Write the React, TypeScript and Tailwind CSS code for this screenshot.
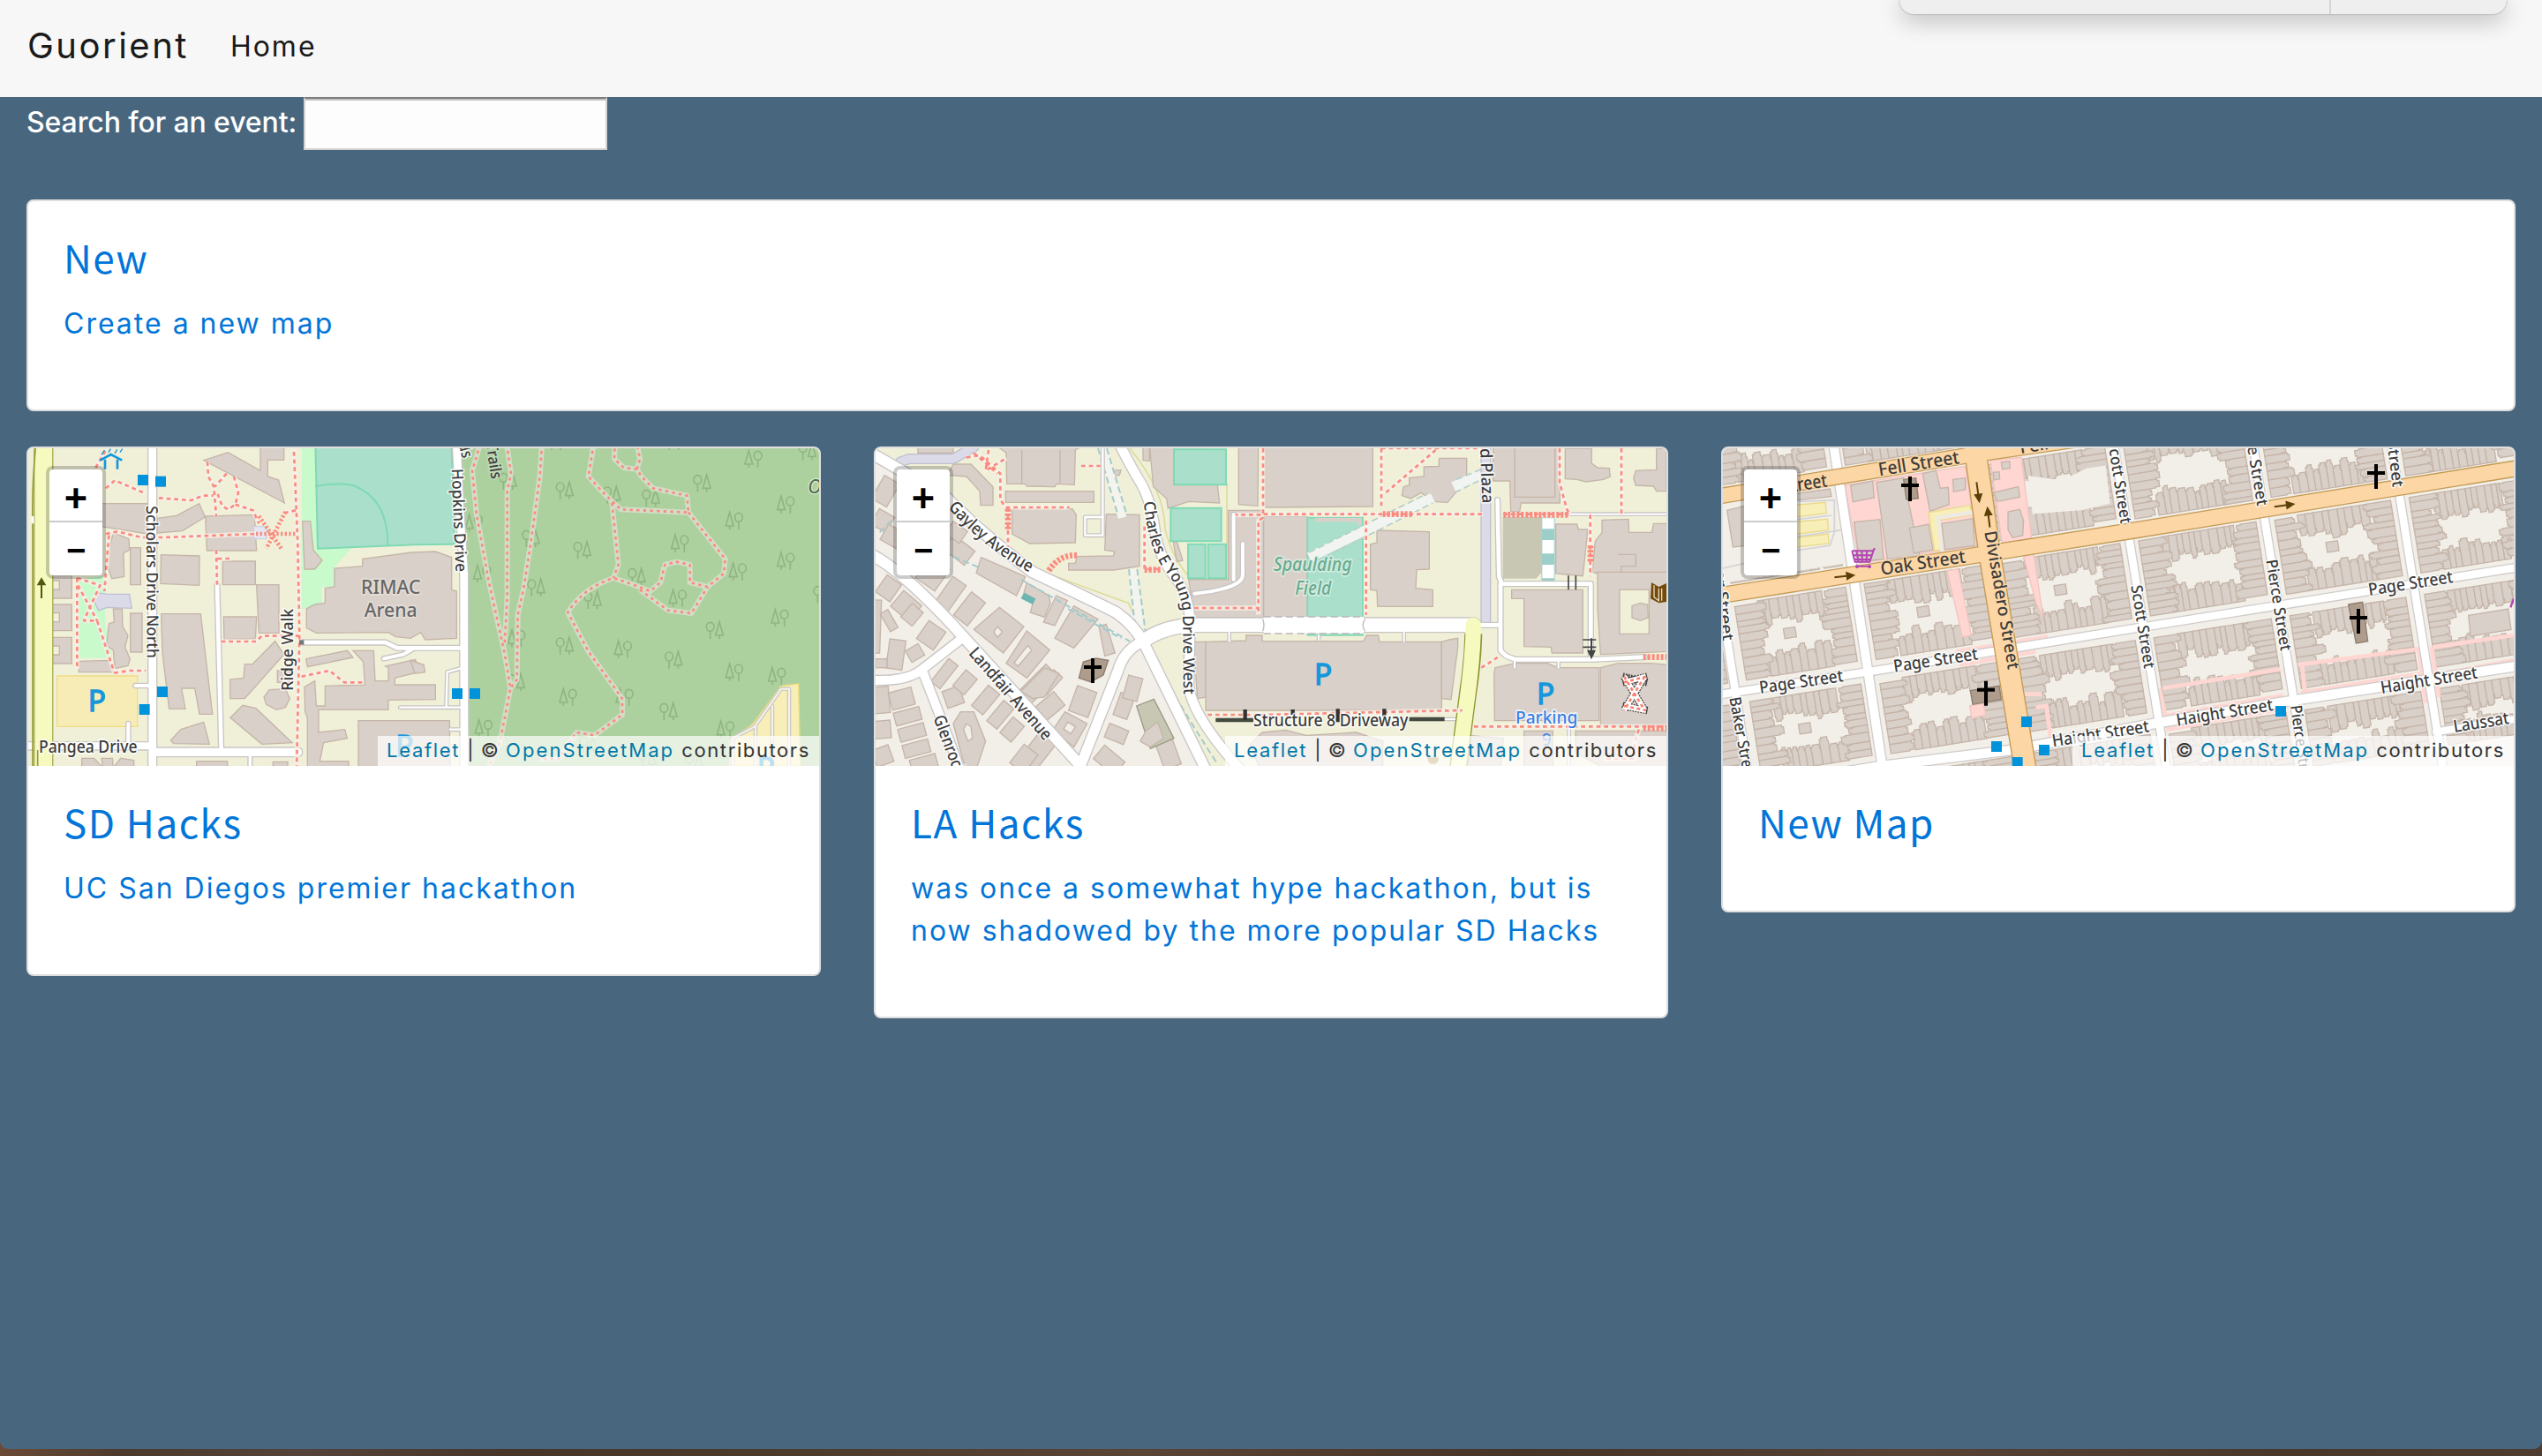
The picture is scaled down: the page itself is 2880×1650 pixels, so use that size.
import React from "react";

type P = [number, number];
const BLD = "#d9d0c9";
const BLD_EDGE = "#c5b5a9";

/** Filled outline built from a point list. */
function B({ d, f = BLD, s = BLD_EDGE, w = 4 }: { d: string; f?: string; s?: string; w?: number }) {
  return <polygon points={d} fill={f} stroke={s} strokeWidth={w} />;
}

/** Rectangle turned around its centre. */
function R({ v, f = BLD, s = BLD_EDGE }: { v: [number, number, number, number, number]; f?: string; s?: string }) {
  const [cx, cy, w, h, a] = v;
  return (
    <rect x={cx - w / 2} y={cy - h / 2} width={w} height={h} fill={f} stroke={s} strokeWidth={4} transform={`rotate(${a} ${cx} ${cy})`} />
  );
}

/** Streets: all casings first and then all fills, so that junctions join. */
function Roads({ list, c = "#c9c5c4", f = "#fff" }: { list: [string, number][]; c?: string; f?: string }) {
  return (
    <g fill="none" strokeLinejoin="round" strokeLinecap="round">
      {list.map(([d, w], i) => <path key={"c" + i} d={d} stroke={c} strokeWidth={w + 8} />)}
      {list.map(([d, w], i) => <path key={"f" + i} d={d} stroke={f} strokeWidth={w} />)}
    </g>
  );
}

function Paths({ list, halo = "#f8f0e8", o = 0.8, dash = "14 12", w = 16 }: { list: string[]; halo?: string; o?: number; dash?: string; w?: number }) {
  return (
    <g fill="none" strokeLinejoin="round">
      {list.map((d, i) => <path key={"h" + i} d={d} stroke={halo} strokeOpacity={o} strokeWidth={w} />)}
      {list.map((d, i) => <path key={"p" + i} d={d} stroke="#fa8b7f" strokeWidth={8} strokeDasharray={dash} />)}
    </g>
  );
}

/** Text set along the line from (x1,y1) to (x2,y2). */
function L({ v, t, fs = 58, c = "#3c3c3c", halo = "#fff", it = false }: { v: [number, number, number, number]; t: string; fs?: number; c?: string; halo?: string; it?: boolean }) {
  const [x1, y1, x2, y2] = v;
  const a = (Math.atan2(y2 - y1, x2 - x1) * 180) / Math.PI;
  return (
    <text x={x1} y={y1} transform={`rotate(${a} ${x1} ${y1})`} textLength={Math.hypot(x2 - x1, y2 - y1)} lengthAdjust="spacingAndGlyphs" fontSize={fs} fontWeight={500} fill={c} stroke={halo} strokeOpacity={0.75} strokeWidth={10} strokeLinejoin="round" paintOrder="stroke" fontStyle={it ? "italic" : "normal"}>
      {t}
    </text>
  );
}

function Curve({ id, d, t, len, fs = 58 }: { id: string; d: string; t: string; len: number; fs?: number }) {
  return (
    <>
      <path id={id} d={d} fill="none" />
      <text fontSize={fs} fontWeight={500} fill="#3c3c3c" stroke="#fff" strokeOpacity={0.75} strokeWidth={10} paintOrder="stroke">
        <textPath href={"#" + id} textLength={len} lengthAdjust="spacingAndGlyphs">{t}</textPath>
      </text>
    </>
  );
}

function Stops({ at }: { at: P[] }) {
  return <g fill="#0092da">{at.map(([x, y], i) => <rect key={i} x={x - 18} y={y - 18} width={36} height={36} />)}</g>;
}

function Parking({ x, y, o = 1 }: { x: number; y: number; o?: number }) {
  return <text x={x} y={y} fontSize={100} fill="#1597dc" stroke="#1597dc" strokeWidth={4} fillOpacity={o} strokeOpacity={o}>P</text>;
}

function Cross({ x, y }: { x: number; y: number }) {
  return <path d={`M${x} ${y - 42}V${y + 42}M${x - 30} ${y - 12}H${x + 30}`} stroke="#000" strokeWidth={12} />;
}

function Arrow({ v, c = "#5a4008" }: { v: [number, number, number]; c?: string }) {
  const [x, y, a] = v;
  return <path transform={`translate(${x} ${y}) rotate(${a})`} d="M-35 -3H5V-15L37 0L5 15V3H-35Z" fill={c} />;
}

function Trees({ pines, rounds }: { pines: P[]; rounds: P[] }) {
  const pine = "M0 -28L-13 18H13ZM0 18V30";
  const round = "M0 -26A13 15 0 1 0 0 4A13 15 0 1 0 0 -26M0 4V30";
  return (
    <g fill="none" stroke="#8fb583" strokeWidth={5}>
      {pines.map(([x, y], i) => (
        <g key={"a" + i}><path d={pine} transform={`translate(${x - 15} ${y})`} /><path d={round} transform={`translate(${x + 16} ${y})`} /></g>
      ))}
      {rounds.map(([x, y], i) => (
        <g key={"b" + i}><path d={round} transform={`translate(${x - 16} ${y})`} /><path d={pine} transform={`translate(${x + 15} ${y})`} /></g>
      ))}
    </g>
  );
}

function MapCanvas({ box, bg, children }: { box: string; bg: string; children: React.ReactNode }) {
  return (
    <svg viewBox={box} className="block h-full w-full rounded-t-[6px] font-['Noto_Sans',sans-serif]" style={{ background: bg }}>
      {children}
    </svg>
  );
}

const forestPines: P[] = [[2560, 90], [2670, 245], [2495, 300], [2310, 377], [2670, 437], [2507, 473], [2303, 563], [1638, 480], [1610, 308], [2650, 630], [2117, 737], [2495, 815], [2640, 828], [1755, 700], [1930, 900], [2122, 900], [1643, 1005], [2465, 1010], [1890, 30], [2290, 30]];
const forestRounds: P[] = [[2387, 172], [1920, 197], [2080, 212], [2213, 222], [1805, 360], [1980, 400], [2165, 490], [1823, 527], [2015, 570], [1727, 165], [2430, 672], [1920, 725], [2290, 773], [1755, 850], [2273, 948], [2795, 550], [2000, 1060], [2745, 64], [2200, 1110], [2360, 1120]];

function SanDiegoMap() {
  return (
    <MapCanvas box="96 54 2688 1080" bg="#f0f0d8">
      <B d="1565,40 2800,40 2800,1150 1593,1150 1590,500" f="#add19e" s="#add19e" />
      <Trees pines={forestPines} rounds={forestRounds} />
      <B d="1028,40 1072,40 1078,396 1190,396 1137,455 1137,520 1092,525 1092,585 1026,600" f="#c8facc" s="#c8facc" />
      <B d="1072,40 1535,40 1545,380 1410,382 1080,395" f="#aae0cb" s="#7fd9b4" w={6} />
      <path d="M1072 183Q1150 170 1200 180Q1320 225 1318 385" fill="none" stroke="#7fd9b4" strokeWidth={6} />
      <B d="262,500 355,490 355,650 380,765 268,765" f="#c8facc" s="#c8facc" />
      <B d="2480,1050 2560,990 2655,862 2714,855 2720,1134 2480,1134" f="#f7efb7" s="#eede7c" />
      <B d="194,828 467,828 467,1000 194,1000" f="#f7ecb5" s="#f0dc84" />
      {/* college buildings */}
      <B d="693,95 775,68 885,130 885,40 965,40 965,94 910,94 910,150 947,162 967,240" />
      <B d="345,242 500,242 500,345 345,320" />
      <B d="535,292 600,283 677,242 697,288 620,335 535,342" />
      <B d="698,285 865,280 872,402 703,402" />
      <B d="385,340 438,362 440,400 420,410 422,490 380,497 360,440" />
      <B d="443,392 478,392 478,518 443,518" />
      <B d="547,416 678,420 677,520 546,514" />
      <B d="757,438 868,438 868,518 757,518" />
      <B d="872,518 948,518 948,682 880,682" />
      <B d="760,627 872,627 868,702 762,704" />
      <B d="548,617 682,617 722,958 678,958 662,870 617,870 630,940 575,940 552,750" />
      <B d="443,615 483,615 483,747 443,747" />
      <B d="385,600 415,600 417,660 435,690 425,730 442,770 435,793 390,803 385,740 362,725 370,650 388,645" />
      <B d="268,778 370,775 385,815 268,815" />
      {[[210, 520], [210, 630], [210, 742]].map(([x, y]) => (
        <g key={y}><B d={`${x - 40},${y - 45} ${x + 34},${y - 45} ${x + 34},${y + 44} ${x - 40},${y + 44}`} /><B d={`${x - 38},${y - 16} ${x - 8},${y - 16} ${x - 8},${y + 14} ${x - 38},${y + 14}`} f="#f0f0d8" /></g>
      ))}
      <B d="935,710 965,755 832,905 782,905 782,840 828,835 832,788 858,788" />
      <B d="943,810 985,810 985,850 943,850" />
      <B d="915,875 970,872 985,905 970,935 940,943 905,925 897,900" />
      <B d="783,970 825,928 870,938 993,1055 890,1060" />
      <B d="580,1047 615,1010 692,985 712,1060 590,1058" />
      <B d="278,1108 320,1108 350,1140 345,1108 382,1108 385,1140 410,1108 455,1115 455,1150 278,1150" />
      <B d="668,1118 773,1118 773,1150 668,1150" />
      <B d="928,1120 978,1120 978,1150 928,1150" />
      <B d="1028,302 1055,302 1065,400 1095,435 1070,465 1035,465" />
      <B d="1232,430 1400,408 1480,405 1535,425 1535,535 1552,540 1552,700 1445,705 1430,680 1395,700 1345,695 1320,680 1075,682 1042,665 1042,600 1070,585 1105,580 1105,530 1137,525 1137,462 1232,455" />
      <B d="1040,770 1180,742 1200,765 1045,797" />
      <B d="1200,742 1270,742 1275,845 1320,845 1320,800 1310,795 1412,772 1422,815 1342,835 1342,858 1480,858 1480,908 1320,910 1320,943 1083,943 1083,1020 1172,1010 1180,1040 1100,1055 1087,1118 1185,1118 1185,1140 1045,1140 1045,970 1037,950 1035,865 1070,845 1075,930 1105,930 1105,862 1240,858 1235,780" />
      <B d="1218,980 1528,980 1530,1140 1218,1140" />
      <B d="1395,775 1440,790 1445,815 1410,820" />
      <B d="330,545 365,550 440,550 448,598 365,595 335,605 320,575" f="#dadae8" s="#bfbfd4" />
      <B d="862,320 908,320 905,362 865,362" f="#e4e6f2" s="#ccd2e2" />
      <Roads list={[["M95 1066H520", 24], ["M518 40V1150", 26], ["M520 1087H1012", 28], ["M738 520L752 1080", 14], ["M460 861H515", 12], ["M436 990V1060", 12], ["M850 1095V1150", 10], ["M1025 714H1310L1350 733H1580", 14], ["M1305 769L1370 755L1400 738", 12], ["M1360 935H1580M1580 798L1520 815L1517 930", 7], ["M1530 1010H1580", 7], ["M1552 40L1562 250L1577 480L1578 1150", 26]]} />
      <Roads list={[["M2490 1134V1040L2565 1000L2655 872H2682V1134M2568 1000V1140M2625 930V1140", 6]]} c="#cfcac2" f="#f4f0ea" />
      <path d="M148 40V1150" stroke="#8e942f" strokeWidth={66} />
      <path d="M148 40V1150" stroke="#f7fabf" strokeWidth={60} />
      <path d="M122 40Q108 180 111 300V1150M128 1080V1150" stroke="#979c38" strokeWidth={5} fill="none" />
      <path d="M111 285V310" stroke="#fff" strokeWidth={9} />
      <Paths list={["M360 190L390 163L495 208M540 223L650 231L690 215L725 215M705 100L708 150L727 185L735 285M770 140L730 185M795 150L810 205L800 245L775 262L755 250L740 210M800 245L860 265L880 310M1005 265L960 275", "M998 40L1012 380L1018 690L1008 1150", "M360 345L400 337L480 357H560L870 345", "M735 400L738 520M740 429H785", "M752 711H870L890 692H1015", "M370 350L355 540M262 495V805M262 495L340 520L285 640H330L388 815M265 520L330 640", "M388 818L440 810H495", "M325 120L360 60M1025 830L1120 810L1170 850H1235"]} />
      <path d="M870 345H1005M880 285L960 400M970 270L905 395" stroke="#fa8b7f" strokeWidth={14} strokeDasharray="7 7" fill="none" />
      <Paths halo="#d3ddc6" o={1} w={18} dash="10 13" list={["M1632 40L1605 130L1620 280L1660 500L1715 750L1735 870L1700 1050L1660 1140", "M1722 40L1737 140L1724 200V560L1715 720", "M1842 40L1835 150L1805 370L1780 530L1760 620L1757 840L1735 870", "M2018 40L2000 150L2060 215L2110 262L2340 272L2335 215L2220 190L2180 150L2165 125L2120 120L2088 90L2090 40M2165 125L2175 90L2165 40", "M2340 272L2465 430L2460 480L2405 525L2345 510V450L2300 440L2260 450L2245 510L2210 540L2145 515L2085 495Q1980 530 1930 612L2000 745L2115 905L2115 960L2020 1030L1960 1020L1930 1060L1900 1110H1830", "M2080 240L2102 450L2085 495", "M2175 535L2270 605L2350 615L2405 525"]} />
      <g stroke="#1597dc" strokeWidth={8} fill="none"><path d="M340 95L377 75L415 95M357 92V125M399 92V125" /><path d="M355 60L345 76M376 56L369 68M398 58L390 72M416 56L408 68" strokeWidth={4} /></g>
      <Stops at={[[486, 162], [546, 167], [552, 882], [491, 942], [1554, 888], [1614, 888]]} />
      <path d="M138 564V520H125L141 493L157 520H144V564Z" fill="#4f5a10" />
      <rect x={1017} y={706} width={16} height={16} fill="#777" />
      <Parking x={299} y={947} />
      <Parking x={1345} y={1100} o={0.9} />
      <Parking x={2573} y={1176} />
      <L v={[497, 250, 500, 768]} t="Scholars Drive North" fs={54} />
      <L v={[996, 878, 996, 600]} t="Ridge Walk" fs={54} />
      <L v={[132, 1090, 467, 1090]} t="Pangea Drive" />
      <L v={[1227, 549, 1430, 549]} t="RIMAC" fs={66} c="#666" halo="#e8e2dc" />
      <L v={[1238, 628, 1418, 628]} t="Arena" fs={66} c="#666" halo="#e8e2dc" />
      <L v={[1535, 124, 1549, 475]} t="Hopkins Drive" fs={54} />
      <L v={[1652, 40, 1670, 160]} t="Trails" fs={54} halo="#c8dcc0" />
      <L v={[1558, 40, 1572, 90]} t="ds" fs={54} />
      <text x={2746} y={206} fontSize={64} fontStyle="italic" fill="#4f6848" stroke="#d5e6cd" strokeWidth={8} paintOrder="stroke">O</text>
    </MapCanvas>
  );
}

function WestwoodMap() {
  const homes: [number, number, number, number, number][] = [
    [100, 200, 60, 90, 30], [90, 300, 60, 60, 30], [135, 360, 90, 60, 30], [260, 480, 80, 90, 35], [350, 400, 60, 90, -52], [340, 340, 60, 50, 35],
    [110, 530, 60, 70, 35], [170, 590, 80, 70, 40], [190, 620, 50, 60, 40], [70, 660, 26, 180, 2], [112, 640, 30, 70, -30], [255, 690, 70, 75, 35], [135, 755, 55, 100, 8], [200, 750, 50, 45, -30], [85, 785, 40, 30, 0],
    [320, 550, 55, 110, 35], [385, 600, 60, 100, 38], [300, 820, 40, 100, 38], [330, 900, 60, 60, -20], [370, 850, 50, 70, 40], [440, 910, 50, 90, 40], [490, 960, 45, 90, 40], [530, 1010, 50, 70, 40],
    [85, 910, 55, 90, -5], [155, 905, 80, 60, -15], [175, 965, 90, 45, -15], [190, 1020, 90, 45, -15], [205, 1075, 90, 45, -15], [230, 1125, 90, 45, -15], [90, 1010, 55, 60, -5], [90, 1100, 60, 60, -20],
    [620, 1080, 70, 120, 38], [570, 1110, 60, 80, 38], [860, 1115, 60, 90, -50], [910, 930, 50, 80, 20], [885, 1025, 70, 50, 22], [1060, 1090, 60, 100, -20], [660, 930, 80, 60, -40], [770, 915, 70, 90, 20],
    [940, 870, 50, 80, 15], [620, 855, 60, 130, 45], [660, 850, 40, 80, 42],
  ];
  return (
    <MapCanvas box="66 54 2688 1080" bg="#f0f0d8">
      <B d="66,80 300,210 640,480 930,590 970,700 1180,1140 60,1140" f="#f2efe9" s="#f2efe9" />
      <path d="M650 480L925 580L945 620M930 54Q1050 200 1050 330Q1080 440 1140 500H1260V170" fill="none" stroke="#dcdc9c" strokeWidth={5} />
      <B d="1130,500 1265,500 1265,265 1385,265 1385,630 1150,630" />
      <B d="1385,285 1534,285 1534,630 1385,630" />
      <B d="1390,40 1756,40 1756,252 1390,255" />
      <B d="1534,290 1722,290 1722,690 1534,690" f="#aae0cb" s="#7fd9b4" w={5} />
      <path d="M1560 297H1712V315" stroke={BLD} strokeWidth={14} fill="none" />
      <B d="1300,40 1367,40 1365,250 1300,245" />
      <B d="997,40 1180,40 1228,178 1235,240 1130,235 1060,258 1055,225 1010,185" />
      <B d="975,50 997,50 997,97 975,95" />
      <B d="210,40 330,40 330,70 210,70" />
      <B d="330,108 390,108 465,185 465,248 423,248 420,200 375,150 310,145" />
      <B d="470,40 780,40 745,60 742,178 680,175 675,185 580,183 575,175 512,175 510,70" />
      <path d="M563 60V175M693 60V172" stroke={BLD_EDGE} strokeWidth={4} />
      <B d="508,200 808,200 808,238 508,238" />
      <B d="530,260 735,260 748,280 745,375 590,378 530,345" />
      <B d="850,278 963,280 963,455 875,468 722,468 722,445 745,445 750,422 875,420 878,405 845,400" />
      <B d="860,130 900,128 895,145 860,150" />
      <B d="1078,375 1090,370 1110,435 1090,440" />
      <B d="1080,58 1257,58 1257,178 1080,178" f="#aae0cb" s="#7fd9b4" w={6} />
      <B d="1069,257 1241,257 1241,370 1069,370" f="#aae0cb" s="#7fd9b4" w={6} />
      <B d="1128,380 1187,380 1187,496 1128,496" f="#aae0cb" s="#7fd9b4" w={6} />
      <B d="1196,380 1257,380 1257,496 1196,496" f="#aae0cb" s="#7fd9b4" w={6} />
      {homes.map((h, i) => <R key={i} v={h} />)}
      {/* apartment blocks between Gayley and Landfair */}
      <B d="425,425 575,490 545,555 408,478" />
      <B d="580,512 655,555 660,580 640,628 592,612 605,565 570,545" />
      <B d="680,555 718,572 675,657 637,645" />
      <B d="740,590 822,635 740,733 675,700" />
      <B d="825,660 850,652 880,750 845,760" />
      <B d="487,595 570,660 500,750 400,670" />
      <B d="480,660 497,678 480,697 468,678" f="#f2efe9" />
      <B d="580,675 658,740 580,835 510,785" />
      <B d="583,725 597,740 550,795 537,783" f="#f2efe9" />
      <B d="560,880 640,800 690,820 640,900 600,905" />
      <B d="355,950 400,950 440,1050 410,1140 370,1140 330,990" />
      <B d="375,990 390,1000 395,1040 380,1050 365,1010" f="#f2efe9" />
      <B d="710,950 785,990 740,1070 670,1010" />
      <B d="720,985 745,1000 730,1025 705,1008" f="#f2efe9" />
      <B d="953,930 1012,907 1080,1040 1000,1075" f="#c7c7b4" s="#9a9a86" />
      <B d="985,1015 1025,985 1045,1040 1000,1070 965,1050" />
      <B d="757,835 772,780 815,768 857,775 840,825 797,848" f="#ae9c8d" s="#8f7d6e" />
      <B d="1147,712 1190,712 1190,900 1160,905" />
      <B d="1188,712 1325,708 1325,690 1380,690 1380,710 1725,710 1735,690 1775,690 1778,712 1990,712 1990,945 1188,945" />
      <B d="1990,712 2015,705 2045,700 2045,730 2022,908 1990,905" />
      <B d="1380,1020 1460,1012 1530,1030 1700,1020 1790,1050 1790,1140 1370,1140 1340,1060" />
      <B d="2080,1030 2200,1040 2190,1140 2080,1140" />
      <B d="1930,117 1980,115 1982,88 2075,88 2075,160 2050,190 2010,238 1960,235 1920,205 1885,225 1855,215 1860,185 1880,180 1880,155 1930,150" />
      <B d="1770,333 1948,338 1948,465 1905,467 1902,530 1960,535 1960,592 1772,592 1770,538 1748,535 1748,380 1770,375" />
      <B d="2165,40 2390,40 2392,240 2260,240 2255,270 2225,270 2222,165 2165,165" />
      <path d="M2238 54V220H2375V54" stroke={BLD_EDGE} strokeWidth={4} fill="none" />
      <B d="2410,54 2500,54 2500,105 2520,120 2560,122 2563,150 2540,160 2480,168 2450,160 2410,158" />
      <B d="2720,54 2754,54 2754,200 2720,200 2710,183 2650,180 2642,155 2650,130 2720,127" />
      <B d="2200,290 2328,290 2328,475 2310,495 2200,495" f="#c7c7b4" s="#c7c7b4" />
      <path d="M2352 290V510" stroke="#9dcfca" strokeWidth={46} />
      <path d="M2352 292V328M2352 366V412M2352 450V496" stroke="#fff" strokeWidth={40} />
      <B d="2378,312 2450,312 2455,330 2487,330 2470,488 2378,480" />
      <B d="2535,298 2625,295 2627,340 2705,340 2710,310 2760,310 2760,745 2530,755 2520,600 2520,480 2502,475 2512,370 2535,340" />
      <path d="M2515 475H2754M2590 415H2650V455H2600V475" stroke={BLD_EDGE} strokeWidth={4} fill="none" />
      <B d="2595,535 2695,535 2695,685 2595,685" f="#f0f0d8" />
      <B d="2637,590 2665,580 2690,585 2692,630 2665,640 2637,630" />
      <B d="2228,535 2470,535 2470,750 2365,750 2362,730 2270,728 2270,565 2228,565" />
      <B d="2172,800 2240,785 2350,785 2385,800 2525,800 2525,980 2170,980 2168,820" />
      <B d="2530,800 2590,785 2700,785 2760,790 2760,1000 2530,1000" />
      <B d="2270,1015 2368,1015 2368,1140 2270,1140" />
      <B d="2445,1015 2760,1015 2760,1140 2540,1140 2445,1090" />
      <g fill="none">
        <path d="M838 54L905 290M940 465L965 690" stroke="#f3f4ee" strokeWidth={30} />
        <path d="M822 54L888 275M852 54L918 275M927 465L950 680M955 465L985 690M560 500L930 710M720 600L900 700M300 410L420 460M80 340L120 300M1005 750Q1080 900 1230 1130" stroke="#a3cbcb" strokeWidth={6} strokeDasharray="22 12" />
        <path d="M1540 425L1960 222M2030 185L2125 140" stroke="#f1f4f0" strokeWidth={34} />
        <path d="M1540 408L1940 208M1560 440L1960 240M2040 160L2125 125M2035 205L2125 160" stroke="#b4cfc9" strokeWidth={5} strokeDasharray="22 12" />
      </g>
      <path d="M565 555L605 575" stroke="#6bb5b3" strokeWidth={22} />
      <Roads list={[["M150 100L180 90H330L400 50", 28], ["M2140 40V640", 28]]} c="#bfbfcf" f="#dadae8" />
      <Roads
        list={[
          ["M838 54V350H778V288H840", 7], ["M1283 280V500M1150 548Q1320 530 1314 480V378", 12], ["M2180 230L2185 490L2195 515H2497V770", 14], ["M2120 655H2190V515V740Q2200 760 2240 772H2500L2680 764", 14],
          ["M2425 278H2760M1268 680V710M1862 680V710M1572 690V705M2238 775V800M2387 775V800M2040 975H1900M2423 1010V1140", 6],
          ["M50 70L300 215Q420 340 600 475Q780 560 880 610Q940 650 975 710", 36], ["M50 415Q160 470 360 690L760 1130", 36], ["M50 842Q170 850 225 805L360 700", 30], ["M225 810Q300 1000 350 1140", 30],
          ["M975 710Q910 740 890 810L760 1140", 34], ["M975 710L1190 1150", 34], ["M895 40Q930 110 960 160Q1000 220 1015 330Q1025 420 1090 500Q1130 560 1135 640L1130 860Q1140 960 1300 1140", 32],
          ["M975 710Q1050 656 1160 655H2100", 46],
        ]}
      />
      <path d="M1385 655H1725" stroke="#fff" strokeWidth={56} />
      <path d="M1385 627H1725M1385 684H1725" stroke="#b9b5b9" strokeWidth={4} strokeDasharray="24 14" />
      <path d="M1382 635Q1390 655 1382 676M1730 635Q1715 655 1730 676" fill="none" stroke="#bbb" strokeWidth={4} />
      <path d="M2098 685Q2096 780 2080 880L2045 1150" fill="none" stroke="#8e942f" strokeWidth={60} />
      <path d="M2098 655Q2096 760 2080 880L2045 1150" fill="none" stroke="#f7fabf" strokeWidth={52} strokeLinecap="round" />
      <Paths list={["M375 85L420 78L490 140V230L510 255H725M450 60L440 130L510 88M400 70L480 140M516 255V390", "M765 114H830M980 320V465H1040", "M1383 54V280H1290M1383 290L1367 300V620M1150 597H1367", "M1385 278H2130M1785 54V250M1785 54H2130M1970 60L1800 205M1733 300V620", "M2391 54V170L2415 260L2425 278M2200 278H2425M2601 54V278M2495 280V490", "M1195 960H1380L2060 945M2125 800L2180 765M2100 1000H2754M2660 1010L2645 1060V1110H2540"]} />
      <path d="M516 260V330M655 470Q690 415 750 418M980 467H1035M1790 278H1890M2200 280H2425M2496 385V440M2675 764H2760M2675 1005H2760" fill="none" stroke="#fa8b7f" strokeWidth={20} strokeDasharray="9 6" />
      <g stroke="#444" strokeWidth={5}><path d="M2421 487V535M2446 487V535M2470 705H2515M2470 730H2515" /></g>
      <path d="M1222 978H1350M1880 975H2000" stroke="#444a40" strokeWidth={13} />
      <path d="M1322 942V978M1484 942V960M1637 940V985M1795 940V965" stroke="#333" strokeWidth={13} />
      <Arrow v={[2499, 735, 90]} c="#444" />
      <g fill="none">
        <path d="M2610 830L2680 945M2680 830L2610 945M2605 850L2690 830M2605 930L2690 945M2605 830L2690 850" stroke="#444" strokeWidth={26} strokeDasharray="5 4" />
        <path d="M2610 830L2680 945M2680 830L2610 945M2610 850L2685 830M2610 930L2685 945" stroke="#fff" strokeWidth={18} />
        <path d="M2610 830L2680 945M2680 830L2610 945M2610 850L2685 830M2610 930L2685 945" stroke="#fa8072" strokeWidth={8} strokeDasharray="12 10" />
      </g>
      <path d="M2703 510L2728 525L2760 510V575L2728 580L2700 565Z" fill="#734a08" />
      <path d="M2712 520V560L2728 572V530M2738 530V572" stroke="#e8dccb" strokeWidth={4} fill="none" />
      <path d="M1942 1105H1980Q1980 1128 1961 1128Q1942 1128 1942 1105" fill="#b08a4a" />
      <Cross x={804} y={810} />
      <Parking x={1557} y={857} />
      <Parking x={2313} y={923} />
      <L v={[2241, 989, 2452, 989]} t="Parking" fs={60} c="#3a80e8" />
      <text x={2330} y={1064} fontSize={58} fill="#3a80e8">9</text>
      <L v={[1418, 472, 1685, 472]} t="Spaulding" fs={64} c="#67ab90" it halo="#dff0e6" />
      <L v={[1492, 553, 1615, 553]} t="Field" fs={64} c="#67ab90" it halo="#dff0e6" />
      <L v={[1350, 1000, 1876, 1000]} t="Structure 8 Driveway" fs={58} />
      <Curve id="gayley" d="M312 256Q435 396 600 482" t="Gayley Avenue" len={355} />
      <Curve id="charles" d="M978 235Q988 380 1046 465Q1106 530 1110 620L1113 885" t="Charles E Young Drive West" len={685} fs={54} />
      <L v={[380, 752, 640, 1050]} t="Landfair Avenue" />
      <L v={[262, 970, 336, 1170]} t="Glenrock" />
      <L v={[2120, 20, 2128, 242]} t="nd Plaza" fs={56} />
    </MapCanvas>
  );
}

// Street axes of the San Francisco grid: x at y=0 of each avenue, and y at x=0 of each street.
const lean = 0.158;
const avenues = [-345, -20, 432, 910, 1388, 1862, 2331, 2790];
const streets = [-103, 223, 562, 900, 1228, 1500];
function cross(a: number, s: number): P {
  const y = (s - 0.159 * a) / (1 + 0.159 * lean);
  return [a + lean * y, y];
}
function rnd(n: number) {
  const v = Math.sin(n * 127.1 + 11.7) * 43758.5453;
  return v - Math.floor(v);
}
/** Terrace of narrow houses along a kerb, each with its own depth. */
function terrace(x: number, y: number, len: number, ang: number, depth: number, seed: number) {
  const out: React.ReactNode[] = [];
  let p = 0;
  let k = 0;
  while (p < len - 12) {
    const w = Math.min(18 + rnd(seed + k) * 14, len - p);
    const d = depth * (0.72 + rnd(seed + k + 50) * 0.5);
    out.push(<path key={k} d={`M${p} 0H${p + w}V${d}H${p + w - 6}V${d + 6}H${p + 3}V${d - 8}H${p}Z`} />);
    p += w;
    k++;
  }
  return <g key={seed} transform={`translate(${x} ${y}) rotate(${ang})`}>{out}</g>;
}

function SanFranciscoMap() {
  const rows: React.ReactNode[] = [];
  for (let i = 0; i < avenues.length - 1; i++) {
    for (let j = 0; j < streets.length - 1; j++) {
      const [x, y] = cross(avenues[i], streets[j]);
      const [x2, y2] = cross(avenues[i + 1], streets[j]);
      const [x3, y3] = cross(avenues[i], streets[j + 1]);
      const w = Math.hypot(x2 - x, y2 - y);
      const h = Math.hypot(x3 - x, y3 - y);
      const s = i * 1000 + j * 170;
      rows.push(
        <g key={s} transform={`translate(${x} ${y}) rotate(-9.05)`}>
          {terrace(110, 40, w - 220, 0, 74, s + 1)}
          {terrace(w - 110, h - 34, w - 220, 180, 74, s + 30)}
          {terrace(32, h - 34, h - 74, -90, 82, s + 60)}
          {terrace(w - 32, 40, h - 74, 90, 82, s + 90)}
          {rnd(s) > 0.4 && <rect x={w / 2 - 40} y={h / 2 - 20} width={40} height={34} />}
        </g>,
      );
    }
  }
  return (
    <MapCanvas box="66 54 2688 1080" bg="#f2efe9">
      <g fill={BLD} stroke={BLD_EDGE} strokeWidth={4}>{rows}</g>
      {/* shops beside Divisadero, and the parking lot */}
      <B d="480,180 890,115 930,385 530,445" f="#ffd6d1" s="#f3c5bf" />
      <B d="975,95 1080,85 1115,360 1015,375" f="#ffd6d1" s="#f3c5bf" />
      <B d="500,180 575,165 580,222 508,236" />
      <B d="588,170 680,155 735,420 625,430" />
      <B d="512,305 600,296 612,430 530,440" />
      <B d="745,140 790,130 805,190 832,187 835,245 770,268" />
      <B d="848,160 890,155 890,195 850,202" />
      <B d="700,325 765,312 780,400 715,410" />
      <B d="765,272 905,248 915,280 805,298 818,400 785,402" f="#f7efb7" s="#ead98a" />
      <path d="M915 272L798 290L812 405" fill="none" stroke="#eee9e2" strokeWidth={14} />
      <B d="810,310 915,293 922,385 820,398" />
      <B d="985,205 1070,185 1075,220 1000,235" />
      <B d="1035,270 1075,262 1088,300 1085,350 1050,358 1035,330" />
      <B d="1012,102 1040,98 1042,122 1016,125" />
      <B d="985,136 1005,134 1007,158 987,162" />
      <B d="1088,420 1122,412 1155,630 1130,580" f="#ffd6d1" s="#f3c5bf" />
      <B d="828,470 866,465 910,690 880,695" f="#ffd6d1" s="#f3c5bf" />
      <B d="905,930 950,922 960,960 912,972" f="#ffd6d1" s="#f3c5bf" />
      <B d="1105,150 1220,165 1300,125 1365,115 1380,240 1290,262 1120,275" f="#f2efe9" s="#f2efe9" />
      <B d="66,240 450,190 500,440 66,510" f="#f2efe9" s="#f2efe9" />
      <B d="80,265 140,250 140,385 100,390" />
      <B d="300,210 430,192 435,218 300,232" />
      <B d="300,248 415,238 417,275 300,290" f="#f7efb7" s="#ead98a" />
      <B d="300,305 422,295 424,332 300,348" f="#f7efb7" s="#ead98a" />
      <B d="300,360 424,345 426,378 300,392" f="#f7efb7" s="#ead98a" />
      <path d="M66 462L140 445M310 402L430 385L445 340V230L320 235M320 296L435 282M320 354L470 332" stroke="#d4d2d2" strokeWidth={5} fill="none" />
      <path d="M1560 870L1960 805M2020 790L2440 735M2480 730L2754 690M1560 965L1970 895M2030 885L2440 820M2510 820L2754 775" stroke="#ffd6d1" strokeWidth={14} />
      <path d="M1550 870L1580 1010L1960 940M1975 800L2000 900M2035 790L2045 890M2430 735L2455 920M2475 730L2500 900M860 745L1170 695M870 790L1130 745M1085 890H1150M1130 935L1165 930L1180 1040" stroke="#ffd6d1" strokeWidth={14} fill="none" />
      <B d="680,160 722,155 730,225 690,228" f="#ae9c8d" s="#8f7d6e" />
      <B d="907,878 1005,862 1012,908 915,925" f="#ae9c8d" s="#8f7d6e" />
      <B d="2192,585 2240,577 2258,710 2218,717" f="#ae9c8d" s="#8f7d6e" />
      <B d="2600,622 2735,600 2745,670 2607,693" />
      <Roads c="#d0cccb" list={[["M50 520L80 700L150 1150", 26], ["M436 0L610 1150", 30], ["M1388 0L1448 370L1575 1150", 26], ["M1862 0L1908 300L2045 1150", 26], ["M2331 0L2365 210L2515 1150", 26], ["M50 892L560 814L1410 675L2760 460", 26], ["M50 1225L600 1135L1045 1080L1560 985L2000 912L2760 795", 32], ["M2490 1018L2760 975", 24]]} />
      <Roads c="#c39a55" f="#fcd6a4" list={[["M40 219L900 78L1300 20", 48], ["M40 557L1440 337L2780 120", 50], ["M915 0L972 408L1095 1150", 70]]} />
      <g fill="none" stroke="#b245b2" strokeWidth={6}><path d="M505 403H575L583 395M508 418H572M510 432H568M520 403L526 440M538 403L540 440M555 403L554 440M505 403L515 440H565L580 395M518 455H568" /></g>
      <circle cx={522} cy={456} r={6} fill="#b245b2" /><circle cx={564} cy={456} r={6} fill="#b245b2" />
      <path d="M2754 565L2743 595" stroke="#b245b2" strokeWidth={7} />
      <Cross x={702} y={192} /><Cross x={960} y={887} /><Cross x={2286} y={150} /><Cross x={2226} y={642} />
      <Arrow v={[480, 489, -6]} /><Arrow v={[933, 204, 82]} /><Arrow v={[969, 288, -97]} /><Arrow v={[1975, 248, -8]} />
      <L v={[598, 148, 872, 105]} t="Fell Street" fs={62} halo="#fcd6a4" />
      <L v={[1078, 72, 1360, 28]} t="Fell Street" fs={62} halo="#fcd6a4" />
      <L v={[302, 202, 423, 184]} t="treet" fs={62} halo="#fcd6a4" />
      <L v={[605, 485, 893, 442]} t="Oak Street" fs={62} halo="#fcd6a4" />
      <L v={[955, 338, 1035, 808]} t="Divisadero Street" fs={58} halo="#fcd6a4" />
      <L v={[193, 888, 477, 846]} t="Page Street" />
      <L v={[649, 815, 935, 772]} t="Page Street" />
      <L v={[2263, 555, 2550, 510]} t="Page Street" />
      <L v={[1188, 1069, 1517, 1018]} t="Haight Street" />
      <L v={[1610, 998, 1938, 945]} t="Haight Street" />
      <L v={[2305, 888, 2633, 835]} t="Haight Street" />
      <L v={[2552, 1020, 2740, 990]} t="Laussat" />
      <L v={[88, 903, 140, 1190]} t="Baker Street" fs={54} />
      <L v={[35, 470, 66, 710]} t="er Street" fs={54} />
      <L v={[1374, 30, 1418, 312]} t="Scott Street" fs={54} />
      <L v={[1453, 522, 1498, 805]} t="Scott Street" fs={54} />
      <L v={[1840, 0, 1882, 252]} t="rce Street" fs={54} />
      <L v={[1912, 435, 1962, 745]} t="Pierce Street" fs={54} />
      <L v={[1995, 930, 2035, 1220]} t="Pierce Street" fs={54} />
      <L v={[2323, 30, 2343, 188]} t="Street" fs={54} />
      <Stops at={[[1098, 984], [996, 1068], [1158, 1080], [1067, 1122], [1962, 948]]} />
    </MapCanvas>
  );
}

function MapPane({ children }: { children: React.ReactNode }) {
  return (
    <div className="relative h-[360px] w-full overflow-hidden">
      {children}
      <div className="absolute left-5 top-5 flex w-[68px] flex-col rounded-[8px] border-4 border-black/20 bg-white bg-clip-padding text-center font-['Liberation_Sans',sans-serif] font-bold text-black">
        <button className="h-[60px] border-b-2 border-[#ccc] pt-[3px] text-[45px] leading-[60px]">+</button>
        <button className="h-[60px] pt-[2px] text-[38px] leading-[60px]">−</button>
      </div>
      <div className="absolute bottom-0 right-0 flex h-[34px] w-[500px] items-center justify-between whitespace-nowrap bg-white/70 pl-[10px] pr-[10px] font-['Inter',sans-serif] text-[22px] leading-[32px] text-[#333]">
        <a className="pb-[2px] tracking-[1.7px] text-[#0078a8]">Leaflet</a>
        <span className="pb-[2px]">|</span>
        <span className="pb-[2px]">©</span>
        <a className="pb-[2px] tracking-[2.1px] text-[#0078a8]">OpenStreetMap</a>
        <span className="pb-[2px] tracking-[1.6px]">contributors</span>
      </div>
    </div>
  );
}

function CardBody({ title, text }: { title: string; text?: string }) {
  return (
    <div className="p-10 text-[#0275d8]">
      <h4 className="-mt-[3px] mb-[25px] font-['Noto_Sans_CJK_SC',sans-serif] text-[44px] leading-[53px] tracking-[1.5px]">{title}</h4>
      {text ? (
        <p className="mb-8 whitespace-pre-line font-['Inter',sans-serif] text-[32px] leading-[48px] tracking-[2px]">{text}</p>
      ) : (
        <div className="h-2" />
      )}
    </div>
  );
}

const cardBox = "rounded-[8px] border-2 border-[#dfdfdf] bg-white bg-clip-border";

export default function App() {
  return (
    <div className="flex h-[1650px] w-[2880px] flex-col overflow-hidden bg-[linear-gradient(90deg,#6b4a35,#4b3a2d_5%,#53433a_12%,#47352a_20%,#4a3b2c_30%,#5a4436_45%,#453428_60%,#574336_75%,#48382c_90%,#4e3c30)]">
      <div className="relative h-[1642px] overflow-hidden rounded-b-[9px] bg-[#48677f]">
        <nav className="flex h-[110px] items-baseline bg-[#f7f7f7] pl-[31px] font-['Inter',sans-serif] text-[#1a1a1a]">
          <a className="text-[40px] leading-[104px] tracking-[2.5px]">Guorient</a>
          <a className="ml-[47px] -translate-y-[2px] text-[32px] leading-[48px] tracking-[2px]">Home</a>
        </nav>
        <div className="absolute right-[40px] top-0 flex h-4 w-[688px] rounded-b-[16px] bg-[#efefef] shadow-[0_6px_26px_rgba(0,0,0,0.3),0_0_2px_rgba(0,0,0,0.4)]">
          <div className="w-[489px] border-r-2 border-[#d4d4d4]" />
        </div>
        <main className="px-[30px]">
          <label className="flex h-[116px] items-start font-['Inter',sans-serif] text-[32px] font-medium leading-[57px] tracking-[-0.1px] text-white">
            <span className="w-[314px] whitespace-nowrap">Search for an event:</span>
            <input className="h-[60px] w-[344px] border-2 border-[#d3d3d3] border-t-[#7d7d7d] bg-[#fdfdfd] shadow-[inset_0_2px_0_#c4c4c4]" />
          </label>
          <section className={cardBox + " h-[240px]"}>
            <CardBody title="New" text="Create a new map" />
          </section>
          <div className="mt-10 grid grid-cols-3 items-start gap-[60px]">
            <article className={cardBox + " h-[600px]"}>
              <MapPane><SanDiegoMap /></MapPane>
              <CardBody title="SD Hacks" text="UC San Diegos premier hackathon" />
            </article>
            <article className={cardBox + " h-[648px]"}>
              <MapPane><WestwoodMap /></MapPane>
              <CardBody title="LA Hacks" text={"was once a somewhat hype hackathon, but is\nnow shadowed by the more popular SD Hacks"} />
            </article>
            <article className={cardBox + " h-[528px]"}>
              <MapPane><SanFranciscoMap /></MapPane>
              <CardBody title="New Map" />
            </article>
          </div>
        </main>
      </div>
    </div>
  );
}
